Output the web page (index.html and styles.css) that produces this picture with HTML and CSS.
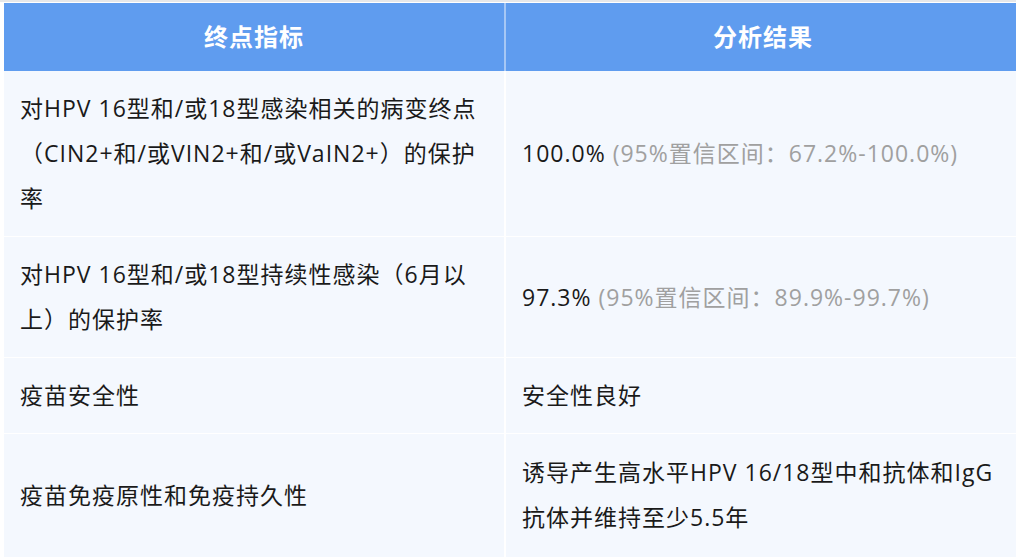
FILE: index.html
```html
<!DOCTYPE html>
<html lang="zh-CN">
<head>
<meta charset="utf-8">
<link rel="stylesheet" href="styles.css">
</head>
<body>
<div class="wrap">
<table class="tbl">
  <thead>
    <tr>
      <th class="c1">终点指标</th>
      <th class="c2">分析结果</th>
    </tr>
  </thead>
  <tbody>
    <tr>
      <td>对HPV 16型和/或18型感染相关的病变终点（CIN2+和/或VIN2+和/或VaIN2+）的保护率</td>
      <td>100.0% <span class="ci">(95%置信区间：67.2%-100.0%)</span></td>
    </tr>
    <tr>
      <td>对HPV 16型和/或18型持续性感染（6月以上）的保护率</td>
      <td>97.3% <span class="ci">(95%置信区间：89.9%-99.7%)</span></td>
    </tr>
    <tr>
      <td>疫苗安全性</td>
      <td>安全性良好</td>
    </tr>
    <tr class="last">
      <td>疫苗免疫原性和免疫持久性</td>
      <td>诱导产生高水平HPV 16/18型中和抗体和IgG抗体并维持至少5.5年</td>
    </tr>
  </tbody>
</table>
</div>
</body>
</html>
```
FILE: styles.css
```css
html, body {
  margin: 0;
  padding: 0;
  background: #ffffff;
  overflow: hidden;
}
.wrap {
  padding: 1px 0 0 4px;
  border-top: 2px solid #e6e7e9;
}
.tbl {
  border-collapse: collapse;
  width: 1016px;
  table-layout: fixed;
  font-family: "Open Sans", "Noto Sans CJK SC", sans-serif;
  font-size: 23px;
  letter-spacing: 1px;
  color: #1a1a1a;
}
.c1 { width: 500px; }
.tbl th {
  background: #5f9cef;
  color: #ffffff;
  font-weight: 700;
  font-size: 24px;
  height: 68px;
  padding: 0;
  text-align: center;
  vertical-align: middle;
  line-height: 30px;
}
.tbl th.c1 {
  border-right: 2px solid #a6c7f5;
}
.tbl td {
  background: #f4f8fe;
  padding: 15px 16px;
  line-height: 45px;
  vertical-align: middle;
  border-bottom: 1px solid #ffffff;
}
.tbl .last td {
  padding-top: 16px;
  padding-bottom: 20px;
  border-bottom: 0;
}
.tbl td:first-child {
  border-right: 2px solid #ffffff;
}
.ci {
  color: #a0a0a0;
}
```
